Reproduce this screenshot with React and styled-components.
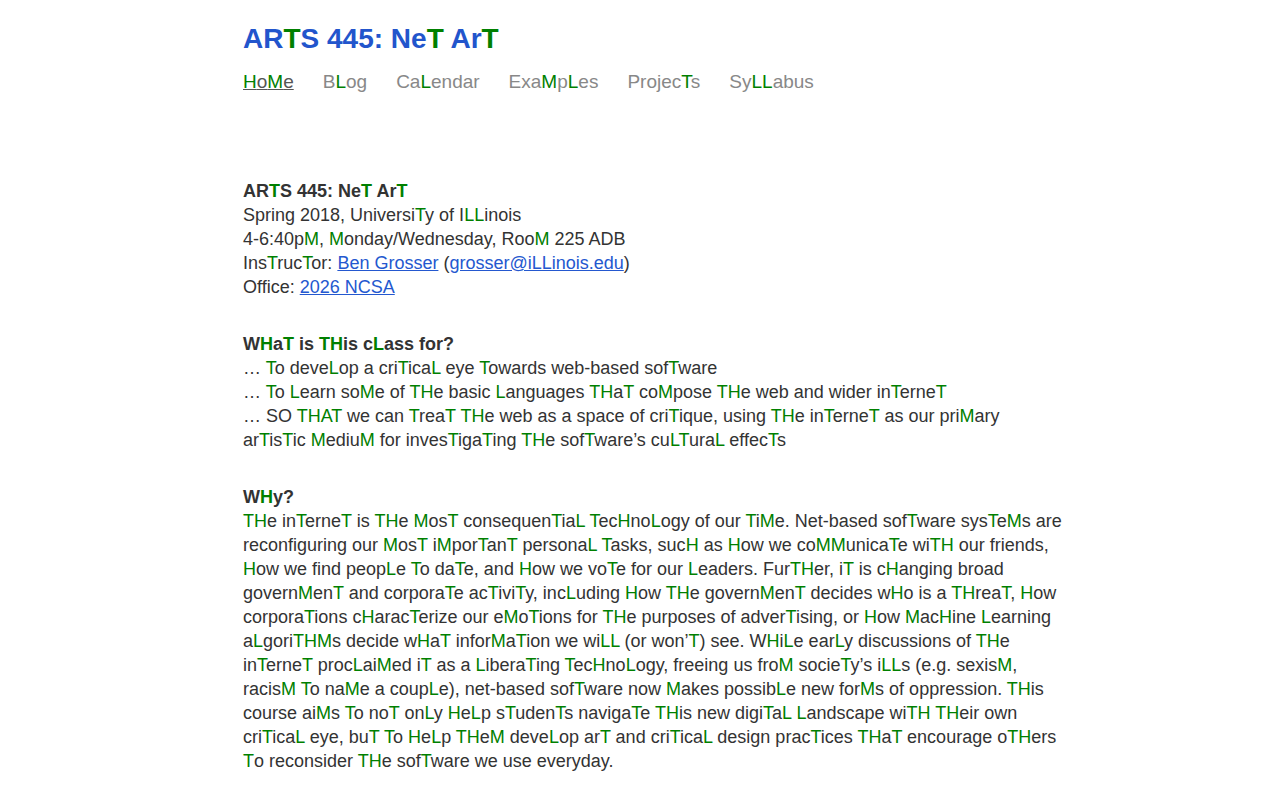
import React from "react";
import styled, { createGlobalStyle } from "styled-components";

const Global = createGlobalStyle`
  html, body { margin: 0; padding: 0; background: #fff; }
  body { font-family: "Liberation Sans", Arial, sans-serif; color: #333; }
`;

const Page = styled.div`
  padding: 21px 0 40px 243px;
`;

const Title = styled.h1`
  margin: 0;
  font-size: 28px;
  line-height: 36px;
  font-weight: bold;
  color: #2255cc;
`;

const Nav = styled.nav`
  margin-top: 13px;
  display: flex;
  gap: 29px;
  font-size: 19px;
  line-height: 24px;
`;

const NavLink = styled.a`
  color: ${(p) => (p.$active ? "#555" : "#888")};
  text-decoration: ${(p) => (p.$active ? "underline" : "none")};
  cursor: pointer;
`;

const Main = styled.main`
  margin-top: 85px;
  max-width: 822px;
  font-size: 18px;
  line-height: 24px;
`;

const Block = styled.p`
  margin: 0 0 33px 0;
`;

const Heading = styled.strong`
  font-weight: bold;
`;

const G = styled.span`
  color: #008000;
`;

const Link = styled.a`
  color: #2458cf;
  text-decoration: underline;
`;

function Net({ children }) {
  const s = String(children);
  const out = [];
  let buf = "";
  let force = false;
  let k = 0;
  for (const ch of s) {
    if (ch === "^") {
      force = true;
      continue;
    }
    if (force || "THLM".includes(ch)) {
      if (buf) out.push(buf);
      buf = "";
      out.push(<G key={k++}>{ch}</G>);
      force = false;
    } else {
      buf += ch;
    }
  }
  if (buf) out.push(buf);
  return <>{out}</>;
}

const navItems = ["HoMe", "BLog", "CaLendar", "ExaMpLes", "ProjecTs", "SyLLabus"];

const whyText =
  "THe inTerneT is THe MosT consequenTiaL TecHnoLogy of our TiMe. Net-based sofTware sysTeMs are reconfiguring our MosT iMporTanT personaL Tasks, sucH as How we coMMunicaTe wiTH our friends, How we find peopLe To daTe, and How we voTe for our Leaders. FurTHer, iT is cHanging broad governMenT and corporaTe acTiviTy, incLuding How THe governMenT decides wHo is a THreaT, How corporaTions cHaracTerize our eMoTions for THe purposes of adverTising, or How MacHine Learning aLgoriTHMs decide wHaT inforMaTion we wiLL (or won’T) see. WHiLe earLy discussions of THe inTerneT procLaiMed iT as a LiberaTing TecHnoLogy, freeing us froM socieTy’s iLLs (e.g. sexisM, racisM To naMe a coupLe), net-based sofTware now Makes possibLe new forMs of oppression. THis course aiMs To noT onLy HeLp sTudenTs navigaTe THis new digiTaL Landscape wiTH THeir own criTicaL eye, buT To HeLp THeM deveLop arT and criTicaL design pracTices THaT encourage oTHers To reconsider THe sofTware we use everyday.";

export default function App() {
  return (
    <>
      <Global />
      <Page>
        <Title>
          <Net>ARTS 445: NeT ArT</Net>
        </Title>
        <Nav>
          {navItems.map((n, i) => (
            <NavLink key={n} $active={i === 0}>
              <Net>{n}</Net>
            </NavLink>
          ))}
        </Nav>
        <Main>
          <Block>
            <Heading>
              <Net>ARTS 445: NeT ArT</Net>
            </Heading>
            <br />
            <Net>Spring 2018, UniversiTy of ILLinois</Net>
            <br />
            <Net>4-6:40pM, Monday/Wednesday, RooM 225 ADB</Net>
            <br />
            <Net>InsTrucTor: </Net>
            <Link>Ben Grosser</Link> (<Link>grosser@iLLinois.edu</Link>)
            <br />
            Office: <Link>2026 NCSA</Link>
          </Block>
          <Block>
            <Heading>
              <Net>WHaT is THis cLass for?</Net>
            </Heading>
            <br />
            <Net>… To deveLop a criTicaL eye Towards web-based sofTware</Net>
            <br />
            <Net>… To Learn soMe of THe basic Languages THaT coMpose THe web and wider inTerneT</Net>
            <br />
            <Net>
              … SO TH^AT we can TreaT THe web as a space of criTique, using THe inTerneT as our priMary arTisTic MediuM for invesTigaTing THe sofTware’s cuLTuraL effecTs
            </Net>
          </Block>
          <Block>
            <Heading>
              <Net>WHy?</Net>
            </Heading>
            <br />
            <Net>{whyText}</Net>
          </Block>
        </Main>
      </Page>
    </>
  );
}
